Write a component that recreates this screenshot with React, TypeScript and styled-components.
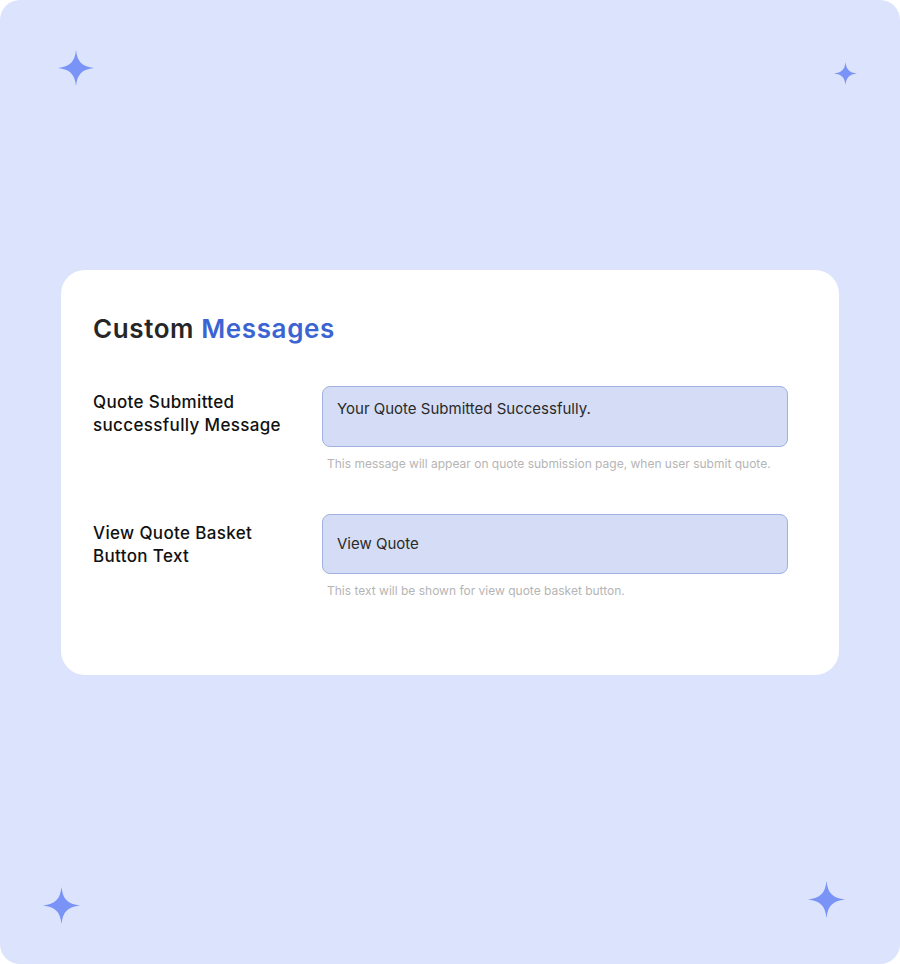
import React from "react";
import styled, { createGlobalStyle } from "styled-components";

const GlobalStyle = createGlobalStyle`
  html, body {
    margin: 0;
    padding: 0;
    background: #ffffff;
  }
  body {
    font-family: "Inter", "Noto Sans", sans-serif;
  }
  * { box-sizing: border-box; }
`;

const Frame = styled.div`
  position: relative;
  width: 900px;
  height: 964px;
  background: #dce3fc;
  border-radius: 20px;
  padding: 270px 61px 0 61px;
  overflow: hidden;
`;

const Sparkle = styled.svg<{ $x: number; $y: number; $size: number }>`
  position: absolute;
  left: ${(p) => p.$x - p.$size / 2}px;
  top: ${(p) => p.$y - p.$size / 2}px;
  width: ${(p) => p.$size}px;
  height: ${(p) => p.$size}px;
  fill: #7a93f7;
  filter: blur(0.4px);
`;

const Card = styled.section`
  background: #ffffff;
  border-radius: 24px;
  padding: 42px 51px 76px 32px;
  display: flex;
  flex-direction: column;
  gap: 40px;
`;

const Title = styled.h1`
  margin: 0;
  font-size: 26px;
  line-height: 34px;
  font-weight: 600;
  color: #262626;
  letter-spacing: 0.6px;
`;

const Accent = styled.span`
  color: #3b64d2;
`;

const Fields = styled.div`
  display: flex;
  flex-direction: column;
  gap: 42px;
`;

const Row = styled.div`
  display: flex;
  align-items: flex-start;
`;

const Label = styled.label<{ $offset: number }>`
  width: 229px;
  flex: none;
  margin-top: ${(p) => p.$offset}px;
  font-size: 17px;
  line-height: 23px;
  font-weight: 500;
  color: #111111;
  letter-spacing: 0.35px;
`;

const Control = styled.div`
  flex: 1;
  display: flex;
  flex-direction: column;
  gap: 9px;
`;

const fieldBase = `
  width: 100%;
  height: 61px;
  background: #d4ddf5;
  border: 1px solid #9fb2e3;
  border-radius: 8px;
  font-family: "Inter", "Noto Sans", sans-serif;
  font-size: 15px;
  color: #2a2a2a;
  padding: 0 14px;
  outline: none;
`;

const TextArea = styled.textarea`
  ${fieldBase}
  resize: none;
  padding-top: 11px;
  line-height: 22px;
`;

const TextInput = styled.input`
  ${fieldBase}
  height: 60px;
  padding-bottom: 2px;
`;

const Hint = styled.p`
  margin: 0;
  padding-left: 5px;
  font-size: 12px;
  line-height: 16px;
  color: #b5b5b5;
`;

const StarShape = ({ x, y, size }: { x: number; y: number; size: number }) => (
  <Sparkle $x={x} $y={y} $size={size} viewBox="0 0 24 24" aria-hidden="true">
    <path d="M12 0 C12.9 8 16 11.1 24 12 C16 12.9 12.9 16 12 24 C11.1 16 8 12.9 0 12 C8 11.1 11.1 8 12 0 Z" />
  </Sparkle>
);

export default function App() {
  return (
    <>
      <GlobalStyle />
      <Frame>
        <StarShape x={76} y={68} size={36} />
        <StarShape x={845} y={73} size={23} />
        <StarShape x={61} y={905} size={37} />
        <StarShape x={826} y={899} size={37} />
        <Card>
          <Title>
            Custom <Accent>Messages</Accent>
          </Title>
          <Fields>
            <Row>
              <Label htmlFor="submitted-msg" $offset={5}>
                Quote Submitted
                <br />
                successfully Message
              </Label>
              <Control>
                <TextArea
                  id="submitted-msg"
                  defaultValue="Your Quote Submitted Successfully."
                />
                <Hint>
                  This message will appear on quote submission page, when user submit quote.
                </Hint>
              </Control>
            </Row>
            <Row>
              <Label htmlFor="basket-text" $offset={8}>
                View Quote Basket
                <br />
                Button Text
              </Label>
              <Control>
                <TextInput id="basket-text" defaultValue="View Quote" />
                <Hint>This text will be shown for view quote basket button.</Hint>
              </Control>
            </Row>
          </Fields>
        </Card>
      </Frame>
    </>
  );
}
